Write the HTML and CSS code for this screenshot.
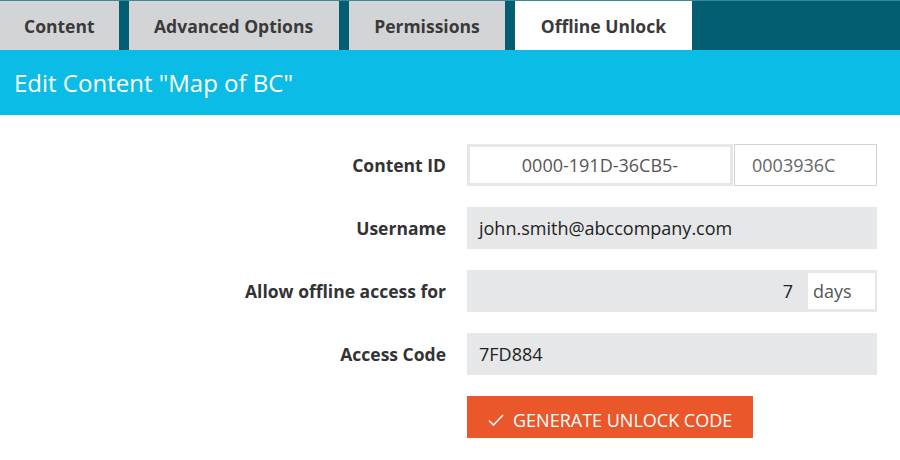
FILE: index.html
```html
<!DOCTYPE html>
<html>
<head>
<meta charset="utf-8">
<link rel="stylesheet" href="styles.css">
</head>
<body>
<nav class="tabs">
  <div class="tab">Content</div>
  <div class="tab">Advanced Options</div>
  <div class="tab">Permissions</div>
  <div class="tab active">Offline Unlock</div>
</nav>
<header class="title">Edit Content "Map of BC"</header>
<main class="form">
  <div class="label">Content ID</div>
  <div class="control split">
    <div class="id-main">0000-191D-36CB5-</div>
    <div class="id-part">0003936C</div>
  </div>
  <div class="label">Username</div>
  <div class="control field">john.smith@abccompany.com</div>
  <div class="label">Allow offline access for</div>
  <div class="control field days-field">
    <span class="num">7</span>
    <span class="unit">days</span>
  </div>
  <div class="label">Access Code</div>
  <div class="control field">7FD884</div>
  <div class="label"></div>
  <div class="control">
    <button class="btn"><svg class="check" viewBox="0 0 16 12" width="16" height="12"><path d="M1 6.5 L5.5 11 L15 1" fill="none" stroke="#fff" stroke-width="1.6"/></svg>GENERATE UNLOCK CODE</button>
  </div>
</main>
</body>
</html>
```
FILE: styles.css
```css
* { box-sizing: border-box; }
body {
  margin: 0;
  background: #fff;
  font-family: "Open Sans", "Noto Sans", sans-serif;
  color: #222;
}
.tabs {
  display: flex;
  gap: 10px;
  height: 50px;
  background: #035e72;
  border-top: 1px solid #3c8a99;
}
.tab {
  background: #d3d4d6;
  color: #3a3a3a;
  font-weight: 700;
  font-size: 17.5px;
  padding: 0 25.5px;
  display: flex;
  align-items: center;
  justify-content: center;
}
.tab:first-child { padding: 0 24px; }
.tab.active { background: #fff; }
.title {
  background: #0abce6;
  color: #fff;
  height: 65px;
  padding-left: 14px;
  display: flex;
  align-items: center;
  font-size: 24px;
}
.form {
  display: grid;
  grid-template-columns: 446px 410px;
  column-gap: 21px;
  row-gap: 21px;
  padding-top: 29px;
}
.label {
  text-align: right;
  font-weight: 700;
  font-size: 17.5px;
  color: #333;
  display: flex;
  align-items: center;
  justify-content: flex-end;
  height: 42px;
}
.control { height: 42px; font-size: 18px; }
.split { display: flex; }
.id-main {
  width: 266px;
  border: 3px solid #e6e7e8;
  display: flex;
  align-items: center;
  justify-content: center;
  color: #555;
}
.id-part {
  flex: 1;
  margin-left: 1px;
  border: 1px solid #d2d3d4;
  display: flex;
  align-items: center;
  padding-left: 17px;
  color: #666;
}
.field {
  background: #e6e7e8;
  display: flex;
  align-items: center;
  padding-left: 12px;
  color: #222;
}
.days-field {
  justify-content: flex-end;
  padding: 3px 2px 3px 0;
}
.num { margin-right: 15px; }
.unit {
  background: #fff;
  width: 67px;
  height: 100%;
  display: flex;
  align-items: center;
  padding-left: 5px;
  color: #555;
}
.btn {
  height: 48px;
  width: 286px;
  background: #e9572b;
  border: none;
  color: #fff;
  font-family: inherit;
  font-size: 18px;
  display: flex;
  align-items: center;
  padding: 0 0 0 21px;
  gap: 9px;
}
.check { flex: none; }
```
